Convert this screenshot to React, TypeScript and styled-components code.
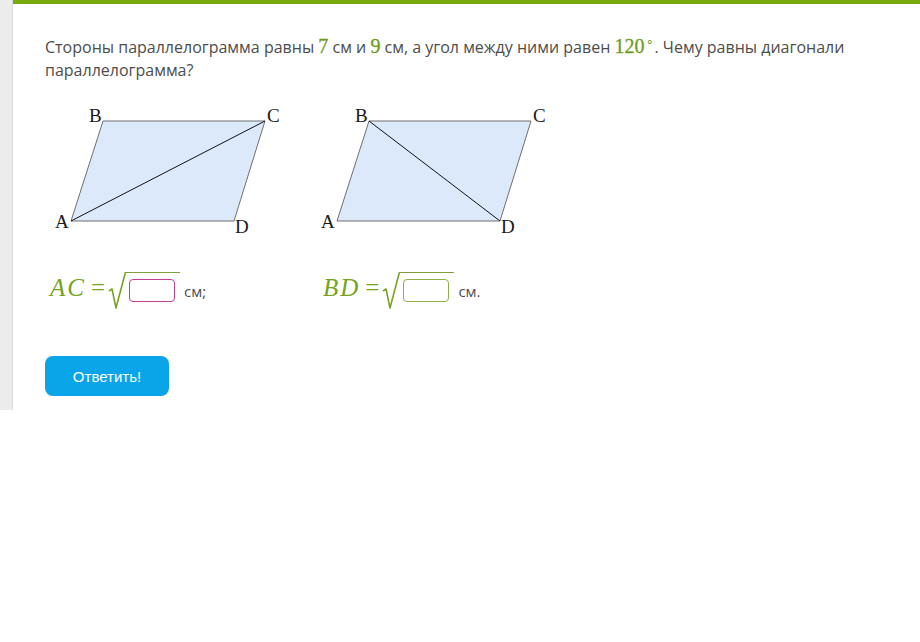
import React from "react";
import styled, { createGlobalStyle } from "styled-components";

const GlobalStyle = createGlobalStyle`
  body {
    margin: 0;
    background: #fff;
    font-family: "Open Sans", "Liberation Sans", sans-serif;
  }
`;

const Page = styled.div`
  display: flex;
  align-items: flex-start;
  width: 920px;
  min-height: 642px;
`;

const Sidebar = styled.div`
  width: 12px;
  height: 410px;
  background: #ececec;
  border-right: 1px solid #d9d9d9;
  flex-shrink: 0;
`;

const Main = styled.main`
  flex: 1;
  border-top: 4px solid #78aa0e;
  padding: 31px 0 0 32px;
`;

const Question = styled.p`
  margin: 0;
  font-size: 16px;
  line-height: 23px;
  color: #4d4d4d;
  max-width: 820px;
`;

const Num = styled.span`
  font-family: "Liberation Serif", "Times New Roman", serif;
  font-size: 20px;
  color: #6c9c1a;
  -webkit-text-stroke: 0.3px #6c9c1a;
`;

const Deg = styled.sup`
  font-size: 12px;
  margin-left: 2px;
  vertical-align: 7px;
  line-height: 0;
  -webkit-text-stroke: 0;
`;

const Figures = styled.div`
  display: flex;
  gap: 26px;
  margin: 18px 0 0 5px;
`;

const Label = styled.text`
  font-family: "Liberation Serif", "Times New Roman", serif;
  font-size: 19px;
  fill: #1a1a1a;
`;

const Answers = styled.div`
  display: flex;
  margin: 31px 0 0 5px;
`;

const Answer = styled.div<{ $width?: number }>`
  display: flex;
  align-items: center;
  width: ${(p) => (p.$width ? `${p.$width}px` : "auto")};
`;

const MathVar = styled.span`
  font-family: "Liberation Serif", "Times New Roman", serif;
  font-style: italic;
  font-size: 25px;
  letter-spacing: 2px;
  color: #76a31e;
  margin-top: -6px;
`;

const Equals = styled.span`
  font-family: "Liberation Serif", "Times New Roman", serif;
  font-size: 25px;
  color: #76a31e;
  margin: -6px 3px 0 5px;
`;

const Radical = styled.span`
  display: inline-flex;
  align-items: flex-start;
  height: 40px;
`;

const Radicand = styled.span`
  border-top: 1.3px solid #7f9f3a;
  margin-top: 1px;
  padding: 6px 5px 0 3px;
`;

const InputBox = styled.input<{ $color: string }>`
  display: block;
  width: 46px;
  height: 23px;
  box-sizing: border-box;
  border: 1px solid ${(p) => p.$color};
  border-radius: 4px;
  background: #fff;
  outline: none;
  padding: 0 4px;
`;

const Unit = styled.span`
  font-size: 15px;
  color: #4d4d4d;
  margin-left: 4px;
`;

const Button = styled.button`
  margin-top: 45px;
  width: 124px;
  height: 40px;
  border: none;
  border-radius: 8px;
  background: #0aa5e8;
  color: #fff;
  font-family: "Liberation Sans", Arial, sans-serif;
  font-size: 15px;
  cursor: pointer;
`;

const Parallelogram: React.FC<{ diagonal: "AC" | "BD" }> = ({ diagonal }) => {
  const A = [21, 121];
  const B = [53, 21];
  const C = [215, 21];
  const D = [184, 121];
  const [p, q] = diagonal === "AC" ? [A, C] : [B, D];
  return (
    <svg width="240" height="140" viewBox="0 0 240 140">
      <polygon
        points={`${A} ${B} ${C} ${D}`}
        fill="#dbe9fa"
        stroke="#6f6f6f"
        strokeWidth="1"
      />
      <line x1={p[0]} y1={p[1]} x2={q[0]} y2={q[1]} stroke="#111" strokeWidth="1" />
      <Label x="39" y="22">B</Label>
      <Label x="217" y="22">C</Label>
      <Label x="5" y="128">A</Label>
      <Label x="185" y="133">D</Label>
    </svg>
  );
};

const Sqrt: React.FC<{ color: string }> = ({ color }) => (
  <Radical>
    <svg width="18" height="40" viewBox="0 0 18 40">
      <polyline
        points="1,20 4,18 8,37 17.5,1"
        fill="none"
        stroke="#7aa321"
        strokeWidth="1.6"
        strokeLinejoin="round"
      />
    </svg>
    <Radicand>
      <InputBox $color={color} />
    </Radicand>
  </Radical>
);

export default function App() {
  return (
    <>
      <GlobalStyle />
      <Page>
        <Sidebar />
        <Main>
          <Question>
            Стороны параллелограмма равны <Num>7</Num> см и <Num>9</Num> см, а угол между ними
            равен{" "}
            <Num>
              120<Deg>∘</Deg>
            </Num>
            . Чему равны диагонали параллелограмма?
          </Question>
          <Figures>
            <Parallelogram diagonal="AC" />
            <Parallelogram diagonal="BD" />
          </Figures>
          <Answers>
            <Answer $width={273}>
              <MathVar>AC</MathVar>
              <Equals>=</Equals>
              <Sqrt color="#c43d8e" />
              <Unit>см;</Unit>
            </Answer>
            <Answer>
              <MathVar>BD</MathVar>
              <Equals>=</Equals>
              <Sqrt color="#8fb046" />
              <Unit>см.</Unit>
            </Answer>
          </Answers>
          <Button>Ответить!</Button>
        </Main>
      </Page>
    </>
  );
}
